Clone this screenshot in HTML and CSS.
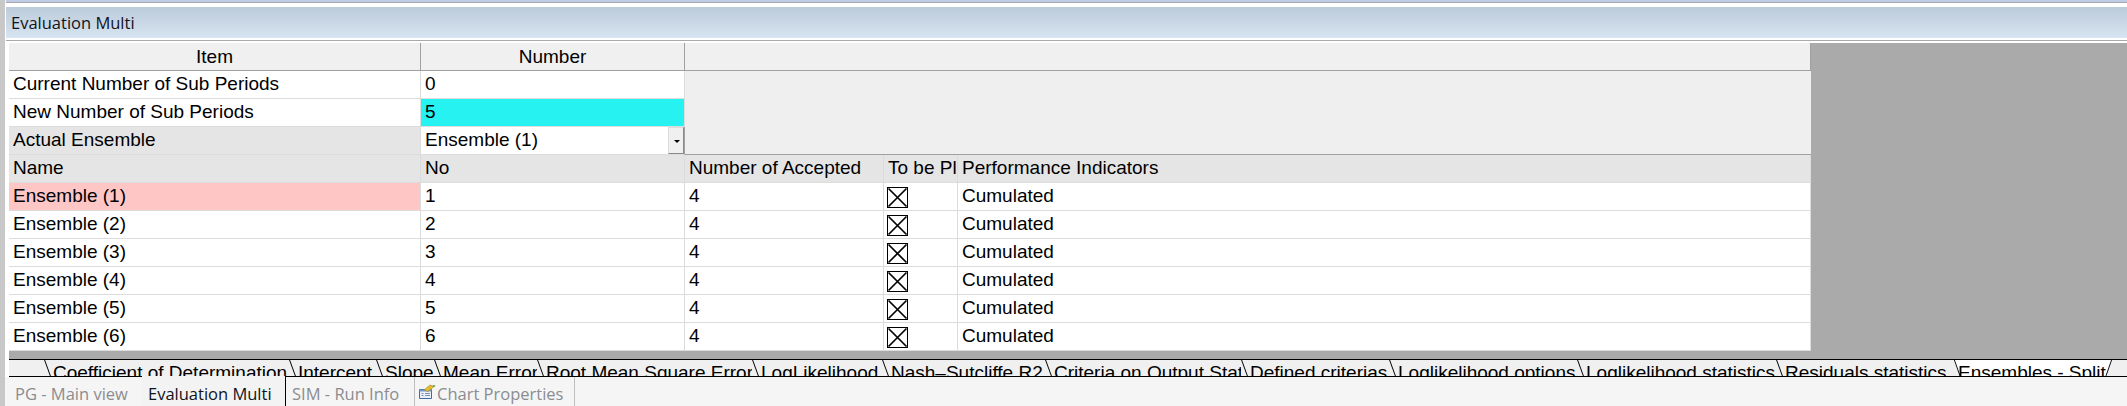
FILE: index.html
```html
<!DOCTYPE html>
<html lang="en">
<head>
<meta charset="utf-8">
<title>Evaluation Multi</title>
<link rel="stylesheet" href="styles.css">
</head>
<body>
<div class="app">
  <div class="topbar"></div>
  <div class="content">
    <div class="title">Evaluation Multi</div>
    <div class="sheet">
      <div class="sheet-body">
        <div class="grid">
          <div class="c hdr center">Item</div>
          <div class="c hdr center">Number</div>
          <div class="c hdr wide"></div>
          <div class="c">Current Number of Sub Periods</div>
          <div class="c">0</div>
          <div class="empty"></div>
          <div class="c">New Number of Sub Periods</div>
          <div class="c cyan">5</div>
          <div class="c label">Actual Ensemble</div>
          <div class="c combo"><span>Ensemble (1)</span><span class="drop"></span></div>
          <div class="c label">Name</div>
          <div class="c label">No</div>
          <div class="c label">Number of Accepted</div>
          <div class="c label">To be Pl</div>
          <div class="c label">Performance Indicators</div>

          <div class="c pink">Ensemble (1)</div><div class="c">1</div><div class="c">4</div>
          <div class="c chk"><svg class="box" viewBox="0 0 21 21"><path class="frame" d="M.5.5h20v20H.5z"/><path class="cross" d="M1.5 1.5l18 18M19.5 1.5l-18 18"/></svg></div><div class="c">Cumulated</div>
          <div class="c">Ensemble (2)</div><div class="c">2</div><div class="c">4</div>
          <div class="c chk"><svg class="box" viewBox="0 0 21 21"><path class="frame" d="M.5.5h20v20H.5z"/><path class="cross" d="M1.5 1.5l18 18M19.5 1.5l-18 18"/></svg></div><div class="c">Cumulated</div>
          <div class="c">Ensemble (3)</div><div class="c">3</div><div class="c">4</div>
          <div class="c chk"><svg class="box" viewBox="0 0 21 21"><path class="frame" d="M.5.5h20v20H.5z"/><path class="cross" d="M1.5 1.5l18 18M19.5 1.5l-18 18"/></svg></div><div class="c">Cumulated</div>
          <div class="c">Ensemble (4)</div><div class="c">4</div><div class="c">4</div>
          <div class="c chk"><svg class="box" viewBox="0 0 21 21"><path class="frame" d="M.5.5h20v20H.5z"/><path class="cross" d="M1.5 1.5l18 18M19.5 1.5l-18 18"/></svg></div><div class="c">Cumulated</div>
          <div class="c">Ensemble (5)</div><div class="c">5</div><div class="c">4</div>
          <div class="c chk"><svg class="box" viewBox="0 0 21 21"><path class="frame" d="M.5.5h20v20H.5z"/><path class="cross" d="M1.5 1.5l18 18M19.5 1.5l-18 18"/></svg></div><div class="c">Cumulated</div>
          <div class="c">Ensemble (6)</div><div class="c">6</div><div class="c">4</div>
          <div class="c chk"><svg class="box" viewBox="0 0 21 21"><path class="frame" d="M.5.5h20v20H.5z"/><path class="cross" d="M1.5 1.5l18 18M19.5 1.5l-18 18"/></svg></div><div class="c">Cumulated</div>
        </div>
      </div>
    </div>
    <div class="sheet-tabs">
      <div class="st w1">Coefficient of Determination</div>
      <div class="st w2">Intercept</div>
      <div class="st w3">Slope</div>
      <div class="st w4">Mean Error</div>
      <div class="st w5">Root Mean Square Error</div>
      <div class="st w6">LogLikelihood</div>
      <div class="st w7">Nash–Sutcliffe R2</div>
      <div class="st w8">Criteria on Output Stat</div>
      <div class="st w9">Defined criterias</div>
      <div class="st w10">Loglikelihood options</div>
      <div class="st w11">Loglikelihood statistics</div>
      <div class="st w12">Residuals statistics</div>
      <div class="st w13 active"><svg class="active-shape" viewBox="0 0 168 17"><path class="shape-fill" d="M0 0H168L162 17H6z"/><path class="shape-edge" d="M.5 0l6 17M167.500 0l-6 17"/></svg><span class="active-label">Ensembles - Split</span></div>
    </div>
  </div>
  <div class="doc-tabs">
    <div class="dt t1">PG - Main view</div>
    <div class="dt t2">Evaluation Multi</div>
    <div class="dt t3">SIM - Run Info</div>
    <div class="dt t4"><svg class="chart-ico" viewBox="0 0 17 15"><path d="M.5 5.500h12v9H.5z" fill="#eaf1fb" stroke="#3f6aa0"/><path d="M.5 5.500h12v2H.5z" fill="#6f98cc"/><path d="M2.500 9.500h2M6 9.500h5M2.500 11.500h2M6 11.500h5" stroke="#7c8ea8"/><path d="M5 6l6-5 4 1.500-6 5z" fill="#e8bb2e" stroke="#9a8428" stroke-width=".6"/><path d="M13.500 1l3 .5-1.500 2z" fill="#5aa03c"/></svg>Chart Properties</div>
  </div>
</div>
</body>
</html>
```
FILE: styles.css
```css
* { box-sizing: border-box; }
html, body { margin: 0; padding: 0; }
body { width: 2127px; height: 406px; overflow: hidden; background: #f5f5f5; font-family: "Liberation Sans", Arial, sans-serif; }
.app { width: 2127px; height: 406px; display: flex; flex-direction: column; overflow: hidden; border-left: 5px solid #c8c8c8; }
.topbar { height: 3px; background: #c0cce8; border-bottom: 1px solid #a9a9a9; margin-left: 1px; flex: none; }
.content { flex: none; height: 374px; display: flex; flex-direction: column; padding-left: 1px; background: #fff; padding-top: 4px; }
.title { height: 31px; flex: none; padding-left: 5px; font: 16.5px/31px "Open Sans", "Noto Sans", sans-serif; color: #10141c; background: linear-gradient(#bccbda, #d7e4f1); }
.sheet { height: 319px; flex: none; margin-top: 2px; border-top: 1px solid #a9a9a9; padding-left: 3px; }
.sheet-body { height: 318px; background: #aaaaaa; border-top: 2px solid #fff; }
.grid { width: 1802px; height: 308px; display: grid; grid-template-columns: 412px 264px 199px 74px 853px; grid-template-rows: repeat(11, 28px); background: #f0f0f0; }
.c { font-size: 19px; line-height: 25px; height: 28px; padding-left: 4px; background: #fff; color: #000; border-bottom: 1px solid #dcdcdc; border-right: 1px solid #dcdcdc; white-space: nowrap; overflow: hidden; }
.hdr { background: #f0f0f0; line-height: 28px; border-bottom: 1px solid #a0a0a0; border-right: 1px solid #a0a0a0; }
.center { text-align: center; padding-left: 0; }
.wide { grid-column: 3 / 6; }
.empty { grid-column: 3 / 6; grid-row: 2 / 5; background: #efefef; border-bottom: 1px solid #a0a0a0; }
.cyan { background: #27f2f2; }
.pink { background: #ffc6c6; }
.label { background: #e5e5e5; }
.combo { display: flex; justify-content: space-between; padding-right: 0; border-right: 1px solid #a0a0a0; }
.drop { width: 16px; height: 27px; background: #f0f0f0; border: 1px solid #dcdcdc; border-right-color: #8a8a8a; border-bottom-color: #8a8a8a; position: relative; }
.drop::after { content: ""; position: absolute; left: 5px; top: 12px; border: 3px solid transparent; border-top: 3px solid #000; border-bottom: 0; }
.chk { padding: 4px 0 0 3px; }
.box { display: block; width: 21px; height: 21px; fill: none; stroke: #000; }
.frame { stroke-width: 1; shape-rendering: crispEdges; }
.cross { stroke-width: 1.7; }
.sheet-tabs { height: 18px; flex: none; display: flex; background: #f0f0f0; border-top: 1px solid #000; border-bottom: 1px solid #000; margin-left: 3px; overflow: hidden; }
.st { flex: none; font-size: 19px; line-height: 25px; height: 16px; overflow: hidden; white-space: nowrap; color: #000; position: relative; padding-left: 9px; }
.st::before { content: ""; position: absolute; left: 3px; top: 0; width: 1px; height: 16px; background: #000; transform: skewX(20deg); }
.w1 { margin-left: 35px; width: 245px; }
.w2 { width: 87px; } .w3 { width: 58px; } .w4 { width: 103px; } .w5 { width: 215px; } .w6 { width: 130px; } .w7 { width: 163px; } .w8 { width: 196px; } .w9 { width: 148px; } .w10 { width: 188px; } .w11 { width: 199px; } .w12 { width: 173px; }
.w13 { width: 168px; }
.active::before { display: none; }
.active-shape { position: absolute; left: 0; top: 0; width: 168px; height: 16px; }
.shape-fill { fill: #fff; }
.shape-edge { fill: none; stroke: #000; stroke-width: 1; }
.active-label { position: relative; }
.doc-tabs { flex: 1; display: flex; background: #f5f5f5; font: 16.5px/33px "Open Sans", "Noto Sans", sans-serif; color: #8c8c90; }
.dt { height: 29px; white-space: nowrap; }
.t1 { width: 137px; padding-left: 10px; }
.t2 { width: 144px; height: 30px; margin-top: -1px; padding-left: 6px; position: relative; color: #10141c; border-right: 1px solid #000; background: #f3f3f3; line-height: 35px; }
.t3 { width: 129px; padding-left: 6px; border-right: 1px solid #c0c0c0; }
.t4 { width: 160px; padding-left: 4px; display: flex; border-right: 1px solid #c0c0c0; }
.chart-ico { width: 17px; height: 15px; margin: 7px 1px 0 0; flex: none; }
```
